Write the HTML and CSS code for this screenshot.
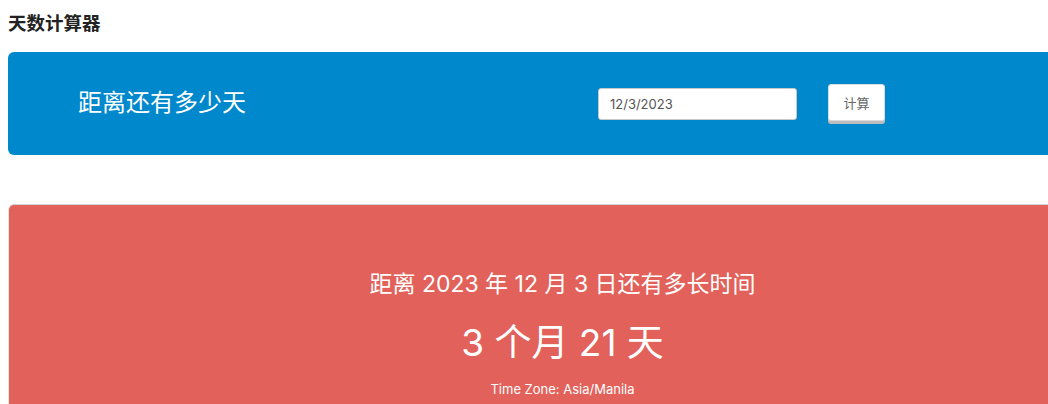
FILE: index.html
```html
<!DOCTYPE html>
<html lang="zh-CN">
<head>
<meta charset="utf-8">
<title>天数计算器</title>
<link rel="stylesheet" href="styles.css">
</head>
<body>
<div class="page">
  <h1 class="page-title">天数计算器</h1>
  <form class="calc-bar" onsubmit="return false">
    <div class="calc-title">距离还有多少天</div>
    <input class="date-input" type="text" value="12/3/2023">
    <button class="calc-btn" type="button">计算</button>
  </form>
  <section class="result">
    <div class="result-heading">距离 2023 年 12 月 3 日还有多长时间</div>
    <div class="result-value">3 个月 21 天</div>
    <div class="result-tz">Time Zone: Asia/Manila</div>
  </section>
</div>
</body>
</html>
```
FILE: styles.css
```css
html {
  overflow: hidden;
}
body {
  margin: 8px 0 0 8px;
  font-family: "Inter", "Noto Sans CJK SC", sans-serif;
  color: #222;
  background: #fff;
  overflow: hidden;
}
.page {
  width: 1108px;
}
.page-title {
  margin: 0 0 14px;
  font-size: 18.5px;
  line-height: 30px;
  font-weight: 700;
  color: #222;
}
.calc-bar {
  display: flex;
  align-items: center;
  height: 103px;
  padding-left: 70px;
  background: #0088cc;
  border-radius: 6px;
  margin: 0;
}
.calc-title {
  width: 520px;
  color: #fff;
  font-size: 24px;
  margin-bottom: 6px;
}
.date-input {
  box-sizing: border-box;
  width: 199px;
  height: 32px;
  border: 1px solid #c8c8c8;
  border-radius: 3px;
  padding: 0 11px;
  font-family: inherit;
  font-size: 13px;
  color: #555;
  background: #fff;
  outline: none;
}
.calc-btn {
  box-sizing: border-box;
  margin-left: 31px;
  width: 57px;
  height: 37px;
  margin-bottom: 3px;
  border: 1px solid #ddd;
  border-radius: 3px;
  background: #fff;
  box-shadow: 0 3px 0 #bdbdbd;
  font-family: inherit;
  font-size: 13px;
  color: #666;
  cursor: pointer;
}
.result {
  margin-top: 49px;
  height: 240px;
  box-sizing: border-box;
  padding-top: 64px;
  background: #e2615a;
  border-top: 1px solid #d4d4d4;
  border-left: 1px solid #e6e6e6;
  border-radius: 6px;
  color: #fff;
  text-align: center;
}
.result-heading {
  font-size: 23px;
  line-height: 30px;
}
.result-value {
  margin-top: 22px;
  font-size: 37px;
  line-height: 44px;
}
.result-tz {
  margin-top: 15px;
  font-size: 13px;
  line-height: 18px;
}
```
